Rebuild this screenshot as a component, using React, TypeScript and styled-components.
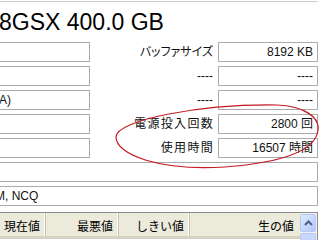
import React from 'react'
import styled, { createGlobalStyle } from 'styled-components'

const GlobalStyle = createGlobalStyle`
  html, body {
    margin: 0;
    padding: 0;
    background: #fff;
  }
  body {
    width: 320px;
    height: 240px;
    overflow: hidden;
    font-family: 'Liberation Sans', 'Noto Sans CJK JP', sans-serif;
    color: #111;
  }
`

const Window = styled.div`
  position: relative;
  width: 320px;
  height: 240px;
  overflow: hidden;
  background: #fff;
`
const TopRule = styled.div`
  margin-top: 1px;
  width: 318px;
  height: 1px;
  background: #cfcfcf;
`
const Title = styled.h1`
  margin: 0 0 0 -1px;
  height: 40px;
  box-sizing: border-box;
  padding-top: 9px;
  font-family: 'Liberation Sans', sans-serif;
  font-weight: normal;
  font-size: 23px;
  line-height: 22px;
  white-space: nowrap;
  color: #000;
`
const InfoGrid = styled.div`
  display: grid;
  grid-template-columns: 90px 128px 100px;
  grid-auto-rows: 20px;
  row-gap: 4px;
`
const Field = styled.div<{ $align?: 'left' | 'right'; $wide?: boolean; $indent?: number }>`
  box-sizing: border-box;
  grid-column: ${(p) => (p.$wide ? '1 / 4' : 'auto')};
  border: 1px solid #ababab;
  border-left: ${(p) => (p.$align === 'right' ? '1px solid #ababab' : 'none')};
  background: #fff;
  overflow: hidden;
  white-space: nowrap;
  font-size: 12px;
  line-height: 18px;
  text-align: ${(p) => p.$align ?? 'left'};
  padding: ${(p) => (p.$align === 'right' ? '0 4px 0 0' : '0')};
  text-indent: ${(p) => p.$indent ?? 0}px;
`
const Label = styled.div<{ $spaced?: boolean; $palt?: boolean }>`
  text-align: right;
  white-space: nowrap;
  font-size: 12px;
  line-height: 20px;
  padding-right: ${(p) => (p.$spaced ? 4 : 5)}px;
  letter-spacing: ${(p) => (p.$spaced ? '1.3px' : '0')};
  font-feature-settings: ${(p) => (p.$palt ? '"palt"' : 'normal')};
`
const List = styled.div`
  margin-top: 6px;
  width: 318px;
  height: 30px;
  box-sizing: border-box;
  border-top: 1px solid #8c8c8c;
  border-right: 1px solid #8c8c8c;
  display: flex;
`
const Header = styled.div`
  flex: 1;
  display: flex;
  height: 23px;
  background: #ebeadb;
  border-bottom: 3px solid #d6d2c2;
`
const HeaderCell = styled.div<{ $w: number }>`
  width: ${(p) => p.$w}px;
  box-sizing: border-box;
  padding-right: 5px;
  text-align: right;
  font-family: 'Noto Sans CJK JP', sans-serif;
  font-size: 12px;
  line-height: 25px;
  color: #000;
  white-space: nowrap;
  overflow: hidden;
  border-right: 1px solid #c7c5b2;
  box-shadow: inset -1px 0 0 #fff;
  &:last-child {
    border-right: none;
    box-shadow: none;
  }
`
const ScrollBar = styled.div`
  width: 17px;
  display: flex;
  flex-direction: column;
  background: #f3f1ec;
`
const ScrollButton = styled.div`
  margin: 1px 1px 1px 0;
  height: 18px;
  box-sizing: border-box;
  border: 1px solid #b4c8f6;
  border-radius: 2px;
  background: linear-gradient(135deg, #e2ebfe 0%, #c4d5fc 60%, #b2c7f8 100%);
  display: flex;
  align-items: center;
  justify-content: center;
`
const ScrollThumb = styled.div`
  margin: 0 1px 0 0;
  flex: 1;
  border: 1px solid #b4c8f6;
  border-bottom: none;
  border-radius: 2px 2px 0 0;
  background: #c8d7fb;
`
const Annotation = styled.svg`
  position: absolute;
  left: 0;
  top: 0;
  pointer-events: none;
`

const leftRows = ['', '', 'A)', '', '']
const rightRows = [
  { label: 'バッファサイズ', value: '8192 KB', palt: true },
  { label: '----', value: '----' },
  { label: '----', value: '----' },
  { label: '電源投入回数', value: '2800 回', spaced: true },
  { label: '使用時間', value: '16507 時間', spaced: true },
]
const columns = [
  { title: '現在値', w: 46 },
  { title: '最悪値', w: 73 },
  { title: 'しきい値', w: 71 },
  { title: '生の値', w: 109 },
]

export default function App() {
  return (
    <Window>
      <GlobalStyle />
      <TopRule />
      <Title>8GSX 400.0 GB</Title>
      <InfoGrid>
        {rightRows.map((row, i) => (
          <React.Fragment key={i}>
            <Field $indent={leftRows[i] ? -1 : 0}>{leftRows[i]}</Field>
            <Label $spaced={row.spaced} $palt={row.palt}>
              {row.label}
            </Label>
            <Field $align='right'>{row.value}</Field>
          </React.Fragment>
        ))}
        <Field $wide />
        <Field $wide $indent={-5}>
          M, NCQ
        </Field>
      </InfoGrid>
      <List>
        <Header>
          {columns.map((c) => (
            <HeaderCell key={c.title} $w={c.w}>
              {c.title}
            </HeaderCell>
          ))}
        </Header>
        <ScrollBar>
          <ScrollButton>
            <svg width='9' height='6' viewBox='0 0 9 6'>
              <path d='M1 5 L4.5 1.5 L8 5' fill='none' stroke='#4d6185' strokeWidth='2' />
            </svg>
          </ScrollButton>
          <ScrollThumb />
        </ScrollBar>
      </List>
      <Annotation width='320' height='240' viewBox='0 0 320 240'>
        <path
          d='M116 137 C116 120 200 104 277 105 C305 106 320 118 318 130 C316 148 290 162 225 167 C160 171 116 155 116 137 Z'
          fill='none'
          stroke='#c41a24'
          strokeWidth='1.2'
        />
      </Annotation>
    </Window>
  )
}
